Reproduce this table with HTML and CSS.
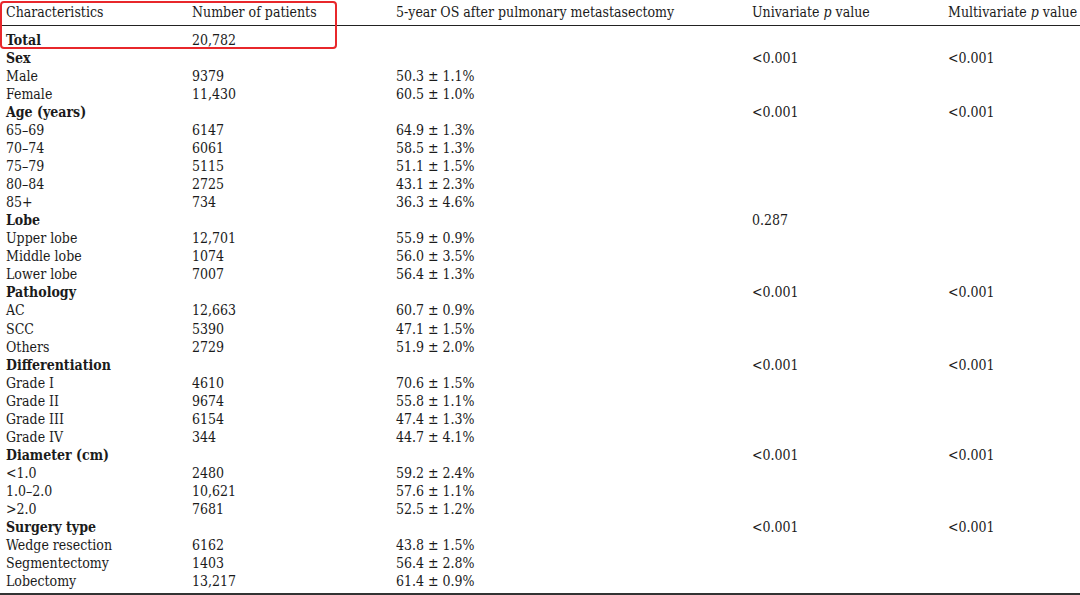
FILE: index.html
```html
<!DOCTYPE html>
<html>
<head>
<meta charset="utf-8">
<link rel="stylesheet" href="styles.css">
</head>
<body>
<div class="page">
<table class="tbl">
<colgroup>
<col class="c1"><col class="c2"><col class="c3"><col class="c4"><col class="c5">
</colgroup>
<thead>
<tr><th>Characteristics</th><th>Number of patients</th><th>5-year OS after pulmonary metastasectomy</th><th>Univariate <i>p</i> value</th><th>Multivariate <i>p</i> value</th></tr>
</thead>
<tbody>
<tr class="first"><td class="b">Total</td><td>20,782</td><td></td><td></td><td></td></tr>
<tr><td class="b">Sex</td><td></td><td></td><td>&lt;0.001</td><td>&lt;0.001</td></tr>
<tr><td>Male</td><td>9379</td><td>50.3 ± 1.1%</td><td></td><td></td></tr>
<tr><td>Female</td><td>11,430</td><td>60.5 ± 1.0%</td><td></td><td></td></tr>
<tr><td class="b">Age (years)</td><td></td><td></td><td>&lt;0.001</td><td>&lt;0.001</td></tr>
<tr><td>65–69</td><td>6147</td><td>64.9 ± 1.3%</td><td></td><td></td></tr>
<tr><td>70–74</td><td>6061</td><td>58.5 ± 1.3%</td><td></td><td></td></tr>
<tr><td>75–79</td><td>5115</td><td>51.1 ± 1.5%</td><td></td><td></td></tr>
<tr><td>80–84</td><td>2725</td><td>43.1 ± 2.3%</td><td></td><td></td></tr>
<tr><td>85+</td><td>734</td><td>36.3 ± 4.6%</td><td></td><td></td></tr>
<tr><td class="b">Lobe</td><td></td><td></td><td>0.287</td><td></td></tr>
<tr><td>Upper lobe</td><td>12,701</td><td>55.9 ± 0.9%</td><td></td><td></td></tr>
<tr><td>Middle lobe</td><td>1074</td><td>56.0 ± 3.5%</td><td></td><td></td></tr>
<tr><td>Lower lobe</td><td>7007</td><td>56.4 ± 1.3%</td><td></td><td></td></tr>
<tr><td class="b">Pathology</td><td></td><td></td><td>&lt;0.001</td><td>&lt;0.001</td></tr>
<tr><td>AC</td><td>12,663</td><td>60.7 ± 0.9%</td><td></td><td></td></tr>
<tr><td>SCC</td><td>5390</td><td>47.1 ± 1.5%</td><td></td><td></td></tr>
<tr><td>Others</td><td>2729</td><td>51.9 ± 2.0%</td><td></td><td></td></tr>
<tr><td class="b">Differentiation</td><td></td><td></td><td>&lt;0.001</td><td>&lt;0.001</td></tr>
<tr><td>Grade I</td><td>4610</td><td>70.6 ± 1.5%</td><td></td><td></td></tr>
<tr><td>Grade II</td><td>9674</td><td>55.8 ± 1.1%</td><td></td><td></td></tr>
<tr><td>Grade III</td><td>6154</td><td>47.4 ± 1.3%</td><td></td><td></td></tr>
<tr><td>Grade IV</td><td>344</td><td>44.7 ± 4.1%</td><td></td><td></td></tr>
<tr><td class="b">Diameter (cm)</td><td></td><td></td><td>&lt;0.001</td><td>&lt;0.001</td></tr>
<tr><td>&lt;1.0</td><td>2480</td><td>59.2 ± 2.4%</td><td></td><td></td></tr>
<tr><td>1.0–2.0</td><td>10,621</td><td>57.6 ± 1.1%</td><td></td><td></td></tr>
<tr><td>&gt;2.0</td><td>7681</td><td>52.5 ± 1.2%</td><td></td><td></td></tr>
<tr><td class="b">Surgery type</td><td></td><td></td><td>&lt;0.001</td><td>&lt;0.001</td></tr>
<tr><td>Wedge resection</td><td>6162</td><td>43.8 ± 1.5%</td><td></td><td></td></tr>
<tr><td>Segmentectomy</td><td>1403</td><td>56.4 ± 2.8%</td><td></td><td></td></tr>
<tr class="last"><td>Lobectomy</td><td>13,217</td><td>61.4 ± 0.9%</td><td></td><td></td></tr>
</tbody>
</table>
<div class="highlight"></div>
</div>
</body>
</html>
```
FILE: styles.css
```css
html, body {
  margin: 0;
  padding: 0;
  background: #fff;
}
.page {
  position: relative;
  width: 1080px;
  height: 595px;
  overflow: hidden;
  font-family: "DejaVu Serif Condensed", "DejaVu Serif", serif;
  font-stretch: semi-condensed;
  font-size: 14px;
  color: #1b1b1b;
}
.tbl {
  width: 1080px;
  border-collapse: collapse;
  table-layout: fixed;
  border-bottom: 2px solid #333;
}
.c1 { width: 192px; }
.c2 { width: 204px; }
.c3 { width: 356px; }
.c4 { width: 196px; }
.c5 { width: 132px; }
.tbl th {
  font-weight: normal;
  text-align: left;
  height: 25px;
  padding: 1px 0 0 0;
  line-height: 23px;
  white-space: nowrap;
  vertical-align: top;
  box-sizing: border-box;
}
.tbl thead tr {
  border-bottom: 1px solid #222;
}
.tbl th:first-child, .tbl td:first-child {
  padding-left: 6px;
}
.tbl td {
  padding: 0;
  height: 18.07px;
  line-height: 18.07px;
  white-space: nowrap;
  vertical-align: top;
}
.tbl tr.first td {
  padding-top: 5px;
}
.tbl tr.last td {
  padding-bottom: 3px;
}
.b {
  font-weight: bold;
}
.highlight {
  position: absolute;
  left: 0;
  top: 1px;
  width: 333px;
  height: 44px;
  border: 2.5px solid #e8272b;
  border-radius: 4px;
}
```
